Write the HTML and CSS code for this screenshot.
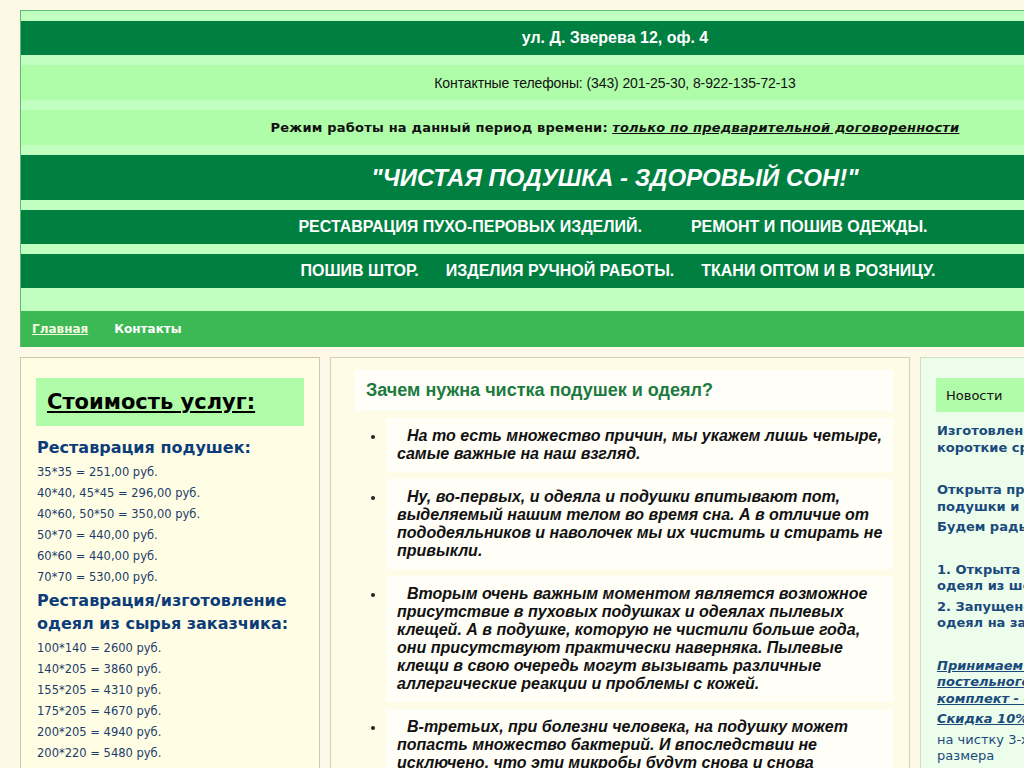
FILE: index.html
```html
<!DOCTYPE html>
<html lang="ru">
<head>
<meta charset="utf-8">
<title>Чистая подушка - здоровый сон</title>
<link rel="stylesheet" href="styles.css">
</head>
<body>
<div class="page">
  <header class="header">
    <div class="row row-dark row-address">ул. Д. Зверева 12, оф. 4</div>
    <div class="row row-light row-phones">Контактные телефоны: (343) 201-25-30, 8-922-135-72-13</div>
    <div class="row row-light row-hours"><span><b>Режим работы на данный период времени:</b> <a class="hours-link" href="#">только по предварительной договоренности</a></span></div>
    <div class="row row-dark row-slogan">"ЧИСТАЯ ПОДУШКА - ЗДОРОВЫЙ СОН!"</div>
    <div class="row row-dark row-services gap-wide"><span>РЕСТАВРАЦИЯ ПУХО-ПЕРОВЫХ ИЗДЕЛИЙ.</span><span>РЕМОНТ И ПОШИВ ОДЕЖДЫ.</span></div>
    <div class="row row-dark row-services gap-narrow"><span>ПОШИВ ШТОР.</span><span>ИЗДЕЛИЯ РУЧНОЙ РАБОТЫ.</span><span>ТКАНИ ОПТОМ И В РОЗНИЦУ.</span></div>
    <nav class="nav"><a class="nav-link nav-active" href="#">Главная</a><a class="nav-link" href="#">Контакты</a></nav>
  </header>

  <div class="columns">
    <aside class="col-left">
      <div class="price-title"><a href="#">Стоимость услуг:</a></div>
      <h3 class="price-head">Реставрация подушек:</h3>
      <p class="price">35*35 = 251,00 руб.</p>
      <p class="price">40*40, 45*45 = 296,00 руб.</p>
      <p class="price">40*60, 50*50 = 350,00 руб.</p>
      <p class="price">50*70 = 440,00 руб.</p>
      <p class="price">60*60 = 440,00 руб.</p>
      <p class="price">70*70 = 530,00 руб.</p>
      <h3 class="price-head">Реставрация/изготовление одеял из сырья заказчика:</h3>
      <p class="price">100*140 = 2600 руб.</p>
      <p class="price">140*205 = 3860 руб.</p>
      <p class="price">155*205 = 4310 руб.</p>
      <p class="price">175*205 = 4670 руб.</p>
      <p class="price">200*205 = 4940 руб.</p>
      <p class="price">200*220 = 5480 руб.</p>
      <p class="price">220*240 = 6270 руб.</p>
      <p class="price">240*260 = 7150 руб.</p>
    </aside>

    <main class="col-main">
      <h2 class="main-title">Зачем нужна чистка подушек и одеял?</h2>
      <ul class="reasons">
        <li><p>На то есть множество причин, мы укажем лишь четыре, самые важные на наш взгляд.</p></li>
        <li><p>Ну, во-первых, и одеяла и подушки впитывают пот, выделяемый нашим телом во время сна. А в отличие от пододеяльников и наволочек мы их чистить и стирать не привыкли.</p></li>
        <li><p>Вторым очень важным моментом является возможное присутствие в пуховых подушках и одеялах пылевых клещей. А в подушке, которую не чистили больше года, они присутствуют практически наверняка. Пылевые клещи в свою очередь могут вызывать различные аллергические реакции и проблемы с кожей.</p></li>
        <li><p>В-третьих, при болезни человека, на подушку может попасть множество бактерий. И впоследствии не исключено, что эти микробы будут снова и снова попадать в организм.</p></li>
      </ul>
    </main>

    <aside class="col-right">
      <div class="news-title">Новости</div>
      <p class="news">Изготовление одеял и подушек в короткие сроки!</p>
      <div class="spacer"></div>
      <p class="news">Открыта продажа новых одеял, подушки и одеяла в наличии.</p>
      <p class="news">Будем рады вас видеть!</p>
      <div class="spacer"></div>
      <p class="news">1. Открыта услуга по пошиву<br>одеял из шерсти.</p>
      <p class="news">2. Запущено производство<br>одеял на заказ.</p>
      <div class="spacer"></div>
      <p class="news news-link"><a href="#">Принимаем заказы на пошив постельного белья. Один комплект - скидка!</a></p>
      <p class="news news-link"><a href="#">Скидка 10% на чистку!</a></p>
      <p class="news-plain">на чистку 3-х подушек любого размера</p>
    </aside>
  </div>
</div>
</body>
</html>
```

FILE: styles.css
```css
html {
  overflow: hidden;
}

body {
  margin: 0;
  background: #fdf8e7;
  font-family: "DejaVu Sans", Verdana, sans-serif;
}

.page {
  width: 1190px;
  margin: 10px 0 0 20px;
}

.header {
  border: 1px solid #5cbf6c;
  border-bottom: none;
  background: #c0ffc0;
  padding-top: 10px;
  display: flex;
  flex-direction: column;
  gap: 10px;
}

.row {
  display: flex;
  align-items: center;
  justify-content: center;
  text-align: center;
}

.row-dark {
  background: #008040;
  color: #ffffff;
  font-family: "Liberation Sans", Arial, sans-serif;
  font-weight: bold;
}

.row-light {
  background: #b0fda9;
  color: #111;
}

.row-address {
  height: 34px;
  font-size: 16px;
}

.row-phones {
  height: 35px;
  font-family: "Liberation Sans", Arial, sans-serif;
  font-size: 14px;
  letter-spacing: -0.1px;
}

.row-hours {
  height: 35px;
  font-size: 13px;
  letter-spacing: 0.2px;
}

.hours-link {
  color: #111;
  font-weight: bold;
  font-style: italic;
}

.row-slogan {
  height: 45px;
  font-size: 24px;
  font-style: italic;
}

.row-services {
  height: 34px;
  font-size: 16px;
}

.gap-wide {
  gap: 49px;
  padding-right: 4px;
}

.gap-narrow {
  gap: 27px;
  padding-left: 6px;
}

.nav {
  margin-top: 13px;
  height: 36px;
  background: #3cb954;
  display: flex;
  align-items: center;
  gap: 26px;
  padding-left: 11px;
}

.nav-link {
  color: #ffffff;
  font-size: 12px;
  font-weight: bold;
  text-decoration: none;
}

.nav-active {
  color: #f4fbe0;
  text-decoration: underline;
}

.columns {
  display: flex;
  gap: 10px;
  margin-top: 10px;
  align-items: flex-start;
}

.col-left {
  width: 268px;
  border: 1px solid #cfc8a8;
  background: #fffee4;
  padding: 20px 15px;
  flex: none;
}

.price-title {
  background: #b0fca8;
  height: 48px;
  display: flex;
  align-items: center;
  padding-left: 11px;
  margin-bottom: 10px;
}

.price-title a {
  color: #000;
  font-size: 21px;
  font-weight: bold;
}

.price-head {
  margin: 1px 0 3px 1px;
  color: #0d3c7a;
  font-size: 16px;
  line-height: 23px;
  font-weight: bold;
}

.price {
  margin: 0 0 0 1px;
  color: #1c3c6c;
  font-size: 11.5px;
  line-height: 21px;
}

.col-main {
  width: 538px;
  border: 1px solid #d6cfb0;
  background: #fefbe7;
  padding: 12px 16px 20px 24px;
  flex: none;
}

.main-title {
  margin: 0;
  height: 41px;
  display: flex;
  align-items: center;
  padding-left: 11px;
  background: #fffef9;
  color: #1b7a3e;
  font-family: "Liberation Sans", Arial, sans-serif;
  font-size: 18px;
  font-weight: bold;
}

.reasons {
  margin: 7px 0 0 0;
  padding-left: 31px;
  font-family: "Liberation Sans", Arial, sans-serif;
  font-size: 14px;
  color: #222;
}

.reasons li {
  background: #fffef7;
  margin-bottom: 7px;
  padding: 9px 10px 9px 11px;
}

.reasons p {
  margin: 0;
  text-indent: 10px;
  font-size: 16px;
  line-height: 18px;
  font-weight: bold;
  font-style: italic;
  color: #111;
}

.col-right {
  width: 258px;
  border: 1px solid #cde0c0;
  background: #ecfdec;
  padding: 20px 15px;
  flex: none;
}

.news-title {
  background: #b0fca8;
  height: 34px;
  display: flex;
  align-items: center;
  padding-left: 10px;
  font-size: 13px;
  color: #111;
  margin-bottom: 11px;
}

.news {
  margin: 0 0 4px 1px;
  color: #1a4a7c;
  font-size: 13px;
  line-height: 16.5px;
  font-weight: bold;
}

.news-link a {
  color: #1a4a7c;
  font-style: italic;
}

.news-plain {
  margin: 0 0 4px 1px;
  color: #1a4a7c;
  font-size: 13px;
  line-height: 16.5px;
}

.spacer {
  height: 22px;
}
```
